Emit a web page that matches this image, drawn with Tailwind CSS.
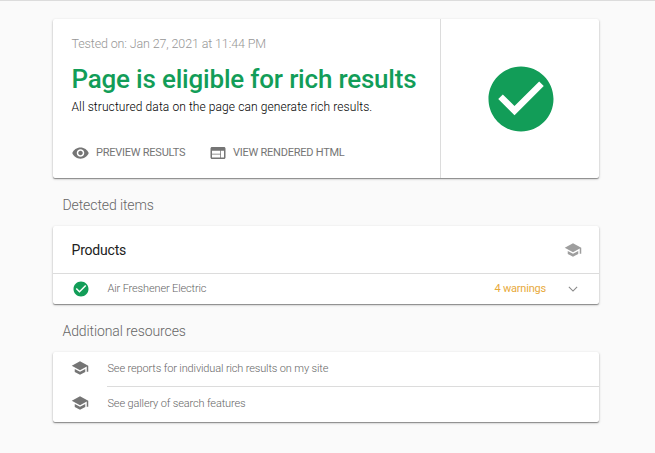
<!DOCTYPE html>
<html lang="en">

<head>
    <meta charset="UTF-8">
    <meta name="viewport" content="width=device-width, initial-scale=1.0">
    <script src="https://cdn.jsdelivr.net/npm/@tailwindcss/browser@4"></script>
    <title>Rich Results Test</title>
</head>

<body class="bg-[#fafafa] font-['Roboto',sans-serif] font-light text-[#666666] h-[453px] overflow-hidden">

    <!-- Icons -->
    <svg class="hidden">
        <symbol id="check" viewBox="0 0 24 24">
            <path d="M12 2C6.48 2 2 6.48 2 12s4.480 10 10 10 10-4.480 10-10S17.520 2 12 2zm-2 15l-5-5 1.410-1.410L10 14.170l7.590-7.590L19 8l-9 9z" />
        </symbol>
        <symbol id="eye" viewBox="0 0 24 24">
            <path d="M12 4.500C7 4.500 2.730 7.610 1 12c1.730 4.390 6 7.500 11 7.500s9.270-3.110 11-7.500c-1.730-4.390-6-7.500-11-7.500zM12 17c-2.760 0-5-2.240-5-5s2.240-5 5-5 5 2.240 5 5-2.240 5-5 5zm0-8c-1.660 0-3 1.340-3 3s1.340 3 3 3 3-1.340 3-3-1.340-3-3-3z" />
        </symbol>
        <symbol id="web" viewBox="0 0 24 24">
            <path d="M20 4H4c-1.100 0-1.990.9-1.990 2L2 18c0 1.100.9 2 2 2h16c1.100 0 2-.9 2-2V6c0-1.100-.9-2-2-2zm-5 14H4v-4h11v4zm0-5H4V9h11v4zm5 5h-4V9h4v9z" />
        </symbol>
        <symbol id="school" viewBox="0 0 24 24">
            <path d="M5 13.180v4L12 21l7-3.820v-4L12 17l-7-3.820zM12 3L1 9l11 6 9-4.910V17h2V9L12 3z" />
        </symbol>
        <symbol id="expand" viewBox="0 0 24 24">
            <path d="M17 8.800L12 13.800 7 8.800 6 9.800l6 6 6-6z" />
        </symbol>
    </svg>

    <div class="h-px bg-[#dcdcdc]"></div>

    <main class="w-[546px] ml-[53px] pt-[18px]">

        <section class="flex h-[159px] rounded-xs bg-white shadow-[0_1px_1px_rgba(0,0,0,0.36),0_1px_3px_rgba(0,0,0,0.2)]">
            <div class="w-[388px] pl-[18.5px] pt-[17px] border-r border-[#dcdcdc] whitespace-nowrap">
                <p class="text-[12.5px] leading-4 tracking-[-0.13px] text-[#969696]">Tested on: Jan 27, 2021 at 11:44 PM</p>
                <h1 class="mt-[11px] text-[26px] leading-8 tracking-[-0.2px] font-medium text-[#129d58]">Page is eligible for rich results</h1>
                <p class="mt-1 text-xs leading-4 tracking-[0.09px] text-black">All structured data on the page can generate rich results.</p>
                <div class="flex mt-[29px] text-[11px] leading-[18px] tracking-[-0.24px] font-normal text-[#757575]">
                    <a class="flex w-[138px] gap-1.5"><svg class="w-[19px] h-[18px] -ml-[0.5px]" fill="currentColor"><use href="#eye" /></svg>PREVIEW RESULTS</a>
                    <a class="flex gap-1.5"><svg class="size-[18px] -ml-[0.5px]" fill="currentColor"><use href="#web" /></svg>VIEW RENDERED HTML</a>
                </div>
            </div>
            <div class="flex flex-1 items-center justify-center">
                <svg class="size-[78px] ml-px" fill="#129d58"><use href="#check" /></svg>
            </div>
        </section>

        <h2 class="pl-[9.5px] h-12 pt-[17px] text-sm leading-5 tracking-[-0.1px]">Detected items</h2>

        <section class="rounded-xs bg-white shadow-[0_1px_1px_rgba(0,0,0,0.36),0_1px_3px_rgba(0,0,0,0.2)]">
            <div class="flex h-12 items-center justify-between pl-[18.5px] pr-[17.5px] border-b border-[#dcdcdc]">
                <h3 class="text-sm tracking-[-0.2px] font-normal text-[#212121]">Products</h3>
                <svg class="size-[18px] text-[#9e9e9e]" fill="currentColor"><use href="#school" /></svg>
            </div>
            <div class="flex h-[30px] items-center pl-[18.5px] pr-[17.5px] text-[11px] tracking-[-0.14px]">
                <svg class="size-[18px]" fill="#129d58"><use href="#check" /></svg>
                <span class="ml-[18px]">Air Freshener Electric</span>
                <span class="ml-auto mr-[17.5px] tracking-[-0.2px] font-normal text-[#e8aa3c]">4 warnings</span>
                <svg class="size-[18px] text-[#8a8a8a]" fill="currentColor"><use href="#expand" /></svg>
            </div>
        </section>

        <h2 class="pl-[9.5px] h-12 pt-[17px] text-sm leading-5 tracking-[-0.1px]">Additional resources</h2>

        <section class="rounded-xs bg-white shadow-[0_1px_1px_rgba(0,0,0,0.36),0_1px_3px_rgba(0,0,0,0.2)] text-[11px] tracking-[-0.14px]">
            <a class="flex h-[35px] items-center pl-[18.4px]">
                <svg class="size-[18px] shrink-0 mb-[3px] text-[#757575]" fill="currentColor"><use href="#school" /></svg>
                <span class="flex flex-1 h-full items-center ml-[17.6px] pl-[0.5px] border-b border-[#dcdcdc]">See reports for individual rich results on my site</span>
            </a>
            <a class="flex h-[35px] items-center pl-[18.4px]">
                <svg class="size-[18px] shrink-0 mb-[3px] text-[#757575]" fill="currentColor"><use href="#school" /></svg>
                <span class="ml-[18.1px]">See gallery of search features</span>
            </a>
        </section>

    </main>

</body>

</html>
